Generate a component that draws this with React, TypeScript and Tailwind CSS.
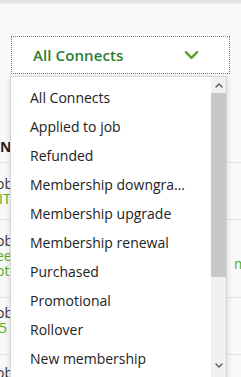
import React from "react";

const options = [
  "All Connects",
  "Applied to job",
  "Refunded",
  "Membership downgra…",
  "Membership upgrade",
  "Membership renewal",
  "Purchased",
  "Promotional",
  "Rollover",
  "New membership",
];

const font = { fontFamily: '"Open Sans", "Liberation Sans", sans-serif' };

function Chevron({ className }: { className?: string }) {
  return (
    <svg viewBox="0 0 16 10" className={className} fill="none">
      <path d="M2 2 L8 8 L14 2" stroke="currentColor" strokeWidth="2.6" strokeLinecap="round" strokeLinejoin="round" />
    </svg>
  );
}

export default function App() {
  return (
    <div className="relative w-[241px] h-[377px] overflow-hidden bg-[#f9f9f9]" style={font}>
      <div className="h-[4px] bg-gradient-to-b from-[#e0e0e0] to-[#ebebeb]" />

      {/* filter select */}
      <div className="mt-[32px] mx-[11px] h-[38px] bg-white border border-dotted border-[#7a7a7a] flex items-center justify-between pl-[21px] pr-[30px]">
        <span className="text-[15px] font-semibold text-[#2a7d35] tracking-[0.1px]">All Connects</span>
        <Chevron className="w-[15px] h-[10px] text-[#5da02a]" />
      </div>

      {/* table behind the menu */}
      <div className="mt-[56px] text-[14px] leading-[15px]">
        <div className="h-[33px] flex items-center justify-between border-b border-[#e4e4e4]">
          <span className="font-bold text-[#222]">N</span>
        </div>
        <div className="h-[57px] flex justify-between border-b border-[#e4e4e4] pt-[13px]">
          <div className="flex flex-col -ml-[4px]">
            <span className="text-[#333]">ob</span>
            <span className="text-[#4fae25] ml-[3px]">IT</span>
          </div>
        </div>
        <div className="h-[78px] flex justify-between border-b border-[#e4e4e4] pt-[13px]">
          <div className="flex flex-col -ml-[4px]">
            <span className="text-[#333]">ob</span>
            <span className="text-[#4fae25]">ee</span>
            <span className="text-[#4fae25]">ot</span>
          </div>
          <span className="text-[#4fae25] mt-[23px] -mr-[6px]">m</span>
        </div>
        <div className="h-[57px] flex justify-between border-b border-[#e4e4e4] pt-[7px]">
          <div className="flex flex-col -ml-[4px]">
            <span className="text-[#333]">ob</span>
            <span className="text-[#4fae25] ml-[3px]">5 I</span>
          </div>
        </div>
        <div className="pt-[10px] -ml-[4px]">
          <span className="text-[#333]">ob</span>
        </div>
      </div>

      {/* open menu */}
      <div className="absolute left-[10px] top-[76px] w-[217px] h-[302px] bg-white border border-[#d6d6d6] shadow-[0_2px_6px_rgba(0,0,0,0.15)] flex">
        <ul className="flex-1 pt-[6px]">
          {options.map((o) => (
            <li key={o} className="h-[29px] flex items-center pl-[19px] text-[14px] text-[#222] whitespace-nowrap">
              {o}
            </li>
          ))}
        </ul>
        <div className="w-[15px] bg-[#f0f0f0] flex flex-col">
          <div className="h-[16px] flex items-center justify-center">
            <Chevron className="w-[8px] h-[5px] text-[#555] rotate-180" />
          </div>
          <div className="h-[184px] bg-[#c8c8c8]" />
          <div className="flex-1" />
          <div className="h-[14px] flex items-start justify-center">
            <Chevron className="w-[8px] h-[5px] text-[#555]" />
          </div>
        </div>
      </div>
    </div>
  );
}
